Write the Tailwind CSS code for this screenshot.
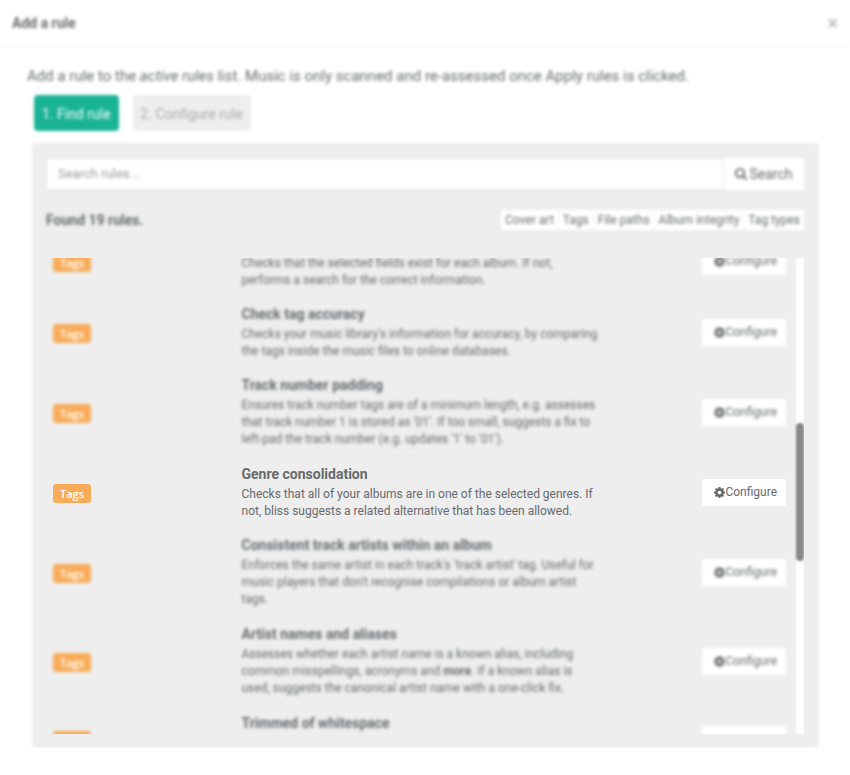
<!DOCTYPE html>
<html lang="en">
<head>
<meta charset="utf-8">
<title>Add a rule</title>
<script src="https://cdn.jsdelivr.net/npm/@tailwindcss/browser@4"></script>
</head>
<body class="bg-white font-[Roboto,sans-serif] text-sm text-[#676a6c]">
<svg class="hidden" aria-hidden="true">
  <symbol id="cog" viewBox="0 0 1536 1536"><path fill="currentColor" d="M1024 768q0-106-75-181t-181-75-181 75-75 181 75 181 181 75 181-75 75-181zm512-109v222q0 12-8 23t-20 13l-185 28q-19 54-39 91 35 50 107 138 10 12 10 25t-9 23q-27 37-99 108t-94 71q-12 0-26-9l-138-108q-44 23-91 38-16 136-29 186-7 28-36 28H657q-14 0-24.500-8.500T621 1506l-28-184q-49-16-90-37l-141 107q-10 9-25 9-14 0-25-11-126-114-165-168-7-10-7-23 0-12 8-23 15-21 51-66.500t54-70.500q-27-50-41-99L29 913q-13-2-21-12.500T0 877V655q0-12 8-23t19-13l186-28q14-46 39-92-40-57-107-138-10-12-10-24 0-10 9-23 26-36 98.500-107.500T337 135q13 0 26 10l138 107q44-23 91-38 16-136 29-186 7-28 36-28h222q14 0 24.500 8.500T915 30l28 184q49 16 90 37l142-107q9-9 24-9 13 0 25 10 129 119 165 170 7 8 7 22 0 12-8 23-15 21-51 66.500t-54 70.500q26 50 41 98l183 28q13 2 21 12.500t8 23.500z"/></symbol>
  <symbol id="search" viewBox="0 0 1664 1664"><path fill="currentColor" d="M1152 704q0-185-131.500-316.500T704 256 387.500 387.500 256 704t131.500 316.500T704 1152t316.500-131.500T1152 704zm512 832q0 52-38 90t-90 38q-54 0-90-38l-343-342q-179 124-399 124-143 0-273.500-55.500t-225-150-150-225T0 704t55.500-273.500 150-225 225-150T704 0t273.500 55.500 225 150 150 225T1408 704q0 220-124 399l343 343q37 37 37 90z"/></symbol>
</svg>
<header class="flex h-[46px] items-center justify-between border-b border-[#eeeeee] px-3 [filter:blur(1px)_blur(1px)]">
  <h1 class="text-sm font-bold">Add a rule</h1>
  <button type="button" aria-label="Close" class="text-xl leading-5 font-bold text-[#bbbbbb]">×</button>
</header>
<main class="pr-[31px] pl-8">
  <div class="[filter:blur(1px)_blur(1px)]">
    <p class="-ml-[5px] pt-5 text-[15px] leading-5">Add a rule to the <em>active rules</em> list. Music is only scanned and re-assessed once Apply rules is clicked.</p>
    <nav class="flex gap-[14px] px-[2px] pt-[9px] text-sm">
      <button type="button" class="h-9 rounded bg-[#1ab394] px-2 pt-[2px] text-white">1. Find rule</button>
      <button type="button" disabled class="h-9 rounded bg-[#eeeeee] px-2 pt-[2px] text-[#aaaaaa]">2. Configure rule</button>
    </nav>
  </div>
  <section class="relative mt-3">
    <div class="absolute inset-0 rounded bg-[#eeeeee] [filter:blur(1px)_blur(1px)]"></div>
    <div class="relative pt-[15px] pr-[15px] pb-[14px] pl-[14px]">
      <div class="[filter:blur(1px)_blur(1px)]">
        <form class="flex h-8">
          <input type="search" aria-label="Search rules" placeholder="Search rules..." class="min-w-0 flex-1 border border-[#e5e6e7] bg-white px-[11px] text-[13px] placeholder:text-[#999999]">
          <button type="button" class="flex w-20 items-center justify-center gap-[2px] bg-white"><svg class="size-3"><use href="#search"/></svg>Search</button>
        </form>
        <div class="flex items-center justify-between pt-5">
          <h2 class="text-sm font-bold">Found 19 rules.</h2>
          <div class="flex text-xs leading-5">
            <button type="button" class="border-r border-[#eeeeee] bg-white px-1">Cover art</button>
            <button type="button" class="border-r border-[#eeeeee] bg-white px-1">Tags</button>
            <button type="button" class="border-r border-[#eeeeee] bg-white px-1">File paths</button>
            <button type="button" class="border-r border-[#eeeeee] bg-white px-1">Album integrity</button>
            <button type="button" class="bg-white px-1">Tag types</button>
          </div>
        </div>
      </div>
      <div class="mt-7 flex h-[476px] overflow-hidden">
        <table class="-mt-[34px] h-fit flex-1 table-fixed border-collapse text-xs leading-[17px]">
          <colgroup><col class="w-1/4"><col class="w-1/2"><col class="w-1/4"></colgroup>
          <tbody>
            <tr class="h-[71px] [filter:blur(1px)_blur(1px)]">
              <td class="px-[7px] pt-[6px]"><span class="inline-block rounded-[3px] bg-[#f8ac59] px-[7px] font-[Open_Sans,sans-serif] text-[11px] leading-[19px] font-semibold text-white">Tags</span></td>
              <td class="px-2 pb-[6px] align-bottom"><p>Checks that the selected fields exist for each album. If not, performs a search for the correct information.</p></td>
              <td class="px-[10px] pt-1 text-right"><button type="button" class="inline-flex h-[27px] items-center rounded-xs bg-white pr-[9px] pl-3"><svg class="size-[11px]"><use href="#cog"/></svg>Configure</button></td>
            </tr>
            <tr class="border-t border-[#ebecec] [filter:blur(1px)_blur(1px)]">
              <td class="px-[7px] pt-[6px]"><span class="inline-block rounded-[3px] bg-[#f8ac59] px-[7px] font-[Open_Sans,sans-serif] text-[11px] leading-[19px] font-semibold text-white">Tags</span></td>
              <td class="px-2 pt-[7px] pb-[6px]"><h3 class="mb-px text-sm leading-[22px] font-bold">Check tag accuracy</h3><p>Checks your music library's information for accuracy, by comparing the tags inside the music files to online databases.</p></td>
              <td class="px-[10px] pt-1 text-right"><button type="button" class="inline-flex h-[27px] items-center rounded-xs bg-white pr-[9px] pl-3"><svg class="size-[11px]"><use href="#cog"/></svg>Configure</button></td>
            </tr>
            <tr class="h-[89px] border-t border-[#ebecec] [filter:blur(1px)_blur(1px)]">
              <td class="px-[7px] pt-[6px]"><span class="inline-block rounded-[3px] bg-[#f8ac59] px-[7px] font-[Open_Sans,sans-serif] text-[11px] leading-[19px] font-semibold text-white">Tags</span></td>
              <td class="px-2 pt-[7px] pb-[6px] align-top"><h3 class="mb-px text-sm leading-[22px] font-bold">Track number padding</h3><p>Ensures track number tags are of a minimum length, e.g. assesses that track number 1 is stored as '01'. If too small, suggests a fix to left-pad the track number (e.g. updates '1' to '01').</p></td>
              <td class="px-[10px] pt-1 text-right"><button type="button" class="inline-flex h-[27px] items-center rounded-xs bg-white pr-[9px] pl-3"><svg class="size-[11px]"><use href="#cog"/></svg>Configure</button></td>
            </tr>
            <tr class="border-t border-[#e7eaec]">
              <td class="px-[7px] pt-[6px]"><span class="inline-block rounded-[3px] bg-[#f8ac59] px-[7px] font-[Open_Sans,sans-serif] text-[11px] leading-[19px] font-semibold text-white">Tags</span></td>
              <td class="px-2 pt-[7px] pb-[6px]"><h3 class="mb-px text-sm leading-[22px] font-bold">Genre consolidation</h3><p>Checks that all of your albums are in one of the selected genres. If not, bliss suggests a related alternative that has been allowed.</p></td>
              <td class="px-[10px] pt-1 text-right"><button type="button" class="inline-flex h-[27px] items-center rounded-xs bg-white pr-[9px] pl-3"><svg class="size-[11px]"><use href="#cog"/></svg>Configure</button></td>
            </tr>
            <tr class="h-[89px] border-t border-[#ebecec] [filter:blur(1px)_blur(1px)]">
              <td class="px-[7px] pt-[6px]"><span class="inline-block rounded-[3px] bg-[#f8ac59] px-[7px] font-[Open_Sans,sans-serif] text-[11px] leading-[19px] font-semibold text-white">Tags</span></td>
              <td class="px-2 pt-[7px] pb-[6px] align-top"><h3 class="mb-px text-sm leading-[22px] font-bold">Consistent track artists within an album</h3><p>Enforces the same artist in each track's 'track artist' tag. Useful for music players that don't recognise compilations or album artist tags.</p></td>
              <td class="px-[10px] pt-1 text-right"><button type="button" class="inline-flex h-[27px] items-center rounded-xs bg-white pr-[9px] pl-3"><svg class="size-[11px]"><use href="#cog"/></svg>Configure</button></td>
            </tr>
            <tr class="h-[89px] border-t border-[#ebecec] [filter:blur(1px)_blur(1px)]">
              <td class="px-[7px] pt-[6px]"><span class="inline-block rounded-[3px] bg-[#f8ac59] px-[7px] font-[Open_Sans,sans-serif] text-[11px] leading-[19px] font-semibold text-white">Tags</span></td>
              <td class="px-2 pt-[7px] pb-[6px] align-top"><h3 class="mb-px text-sm leading-[22px] font-bold">Artist names and aliases</h3><p>Assesses whether each artist name is a known alias, including common misspellings, acronyms and <b>more</b>. If a known alias is used, suggests the canonical artist name with a one-click fix.</p></td>
              <td class="px-[10px] pt-1 text-right"><button type="button" class="inline-flex h-[27px] items-center rounded-xs bg-white pr-[9px] pl-3"><svg class="size-[11px]"><use href="#cog"/></svg>Configure</button></td>
            </tr>
            <tr class="h-[71px] border-t border-[#ebecec] [filter:blur(1px)_blur(1px)]">
              <td class="px-[7px] pt-[6px]"><span class="inline-block h-[19px] w-[38px] rounded-[3px] bg-[#f8ac59]"></span></td>
              <td class="px-2 pt-[7px] align-top"><h3 class="text-sm leading-[22px] font-bold">Trimmed of whitespace</h3></td>
              <td class="px-[10px] pt-1 text-right"><span class="inline-block h-[27px] w-[84px] rounded-xs bg-white"></span></td>
            </tr>
          </tbody>
        </table>
        <div class="w-2 shrink-0 bg-white pt-[165px] blur-[1px]"><div class="h-[138px] rounded bg-[#888888]"></div></div>
      </div>
    </div>
  </section>
</main>
</body>
</html>
